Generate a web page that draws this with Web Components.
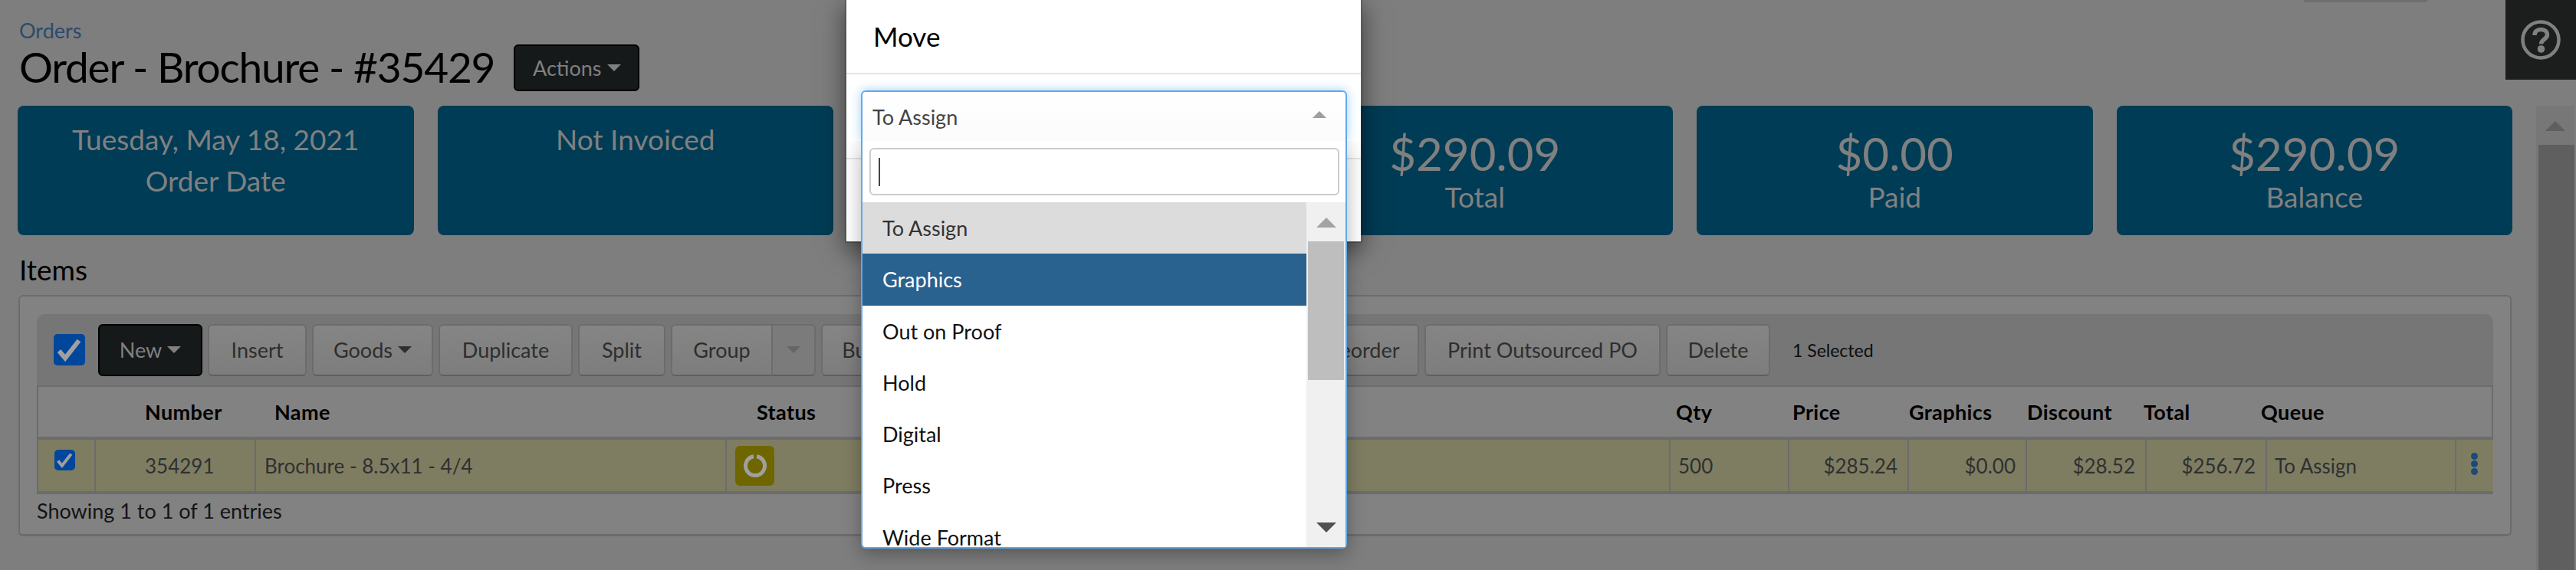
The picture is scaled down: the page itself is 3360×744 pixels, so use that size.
<!DOCTYPE html>
<html>
<head>
<meta charset="utf-8">
<title>Order - Brochure - #35429</title>
<style>
    html, body { margin: 0; height: 744px; overflow: hidden; background: #7e7e7e; }
    body { position: relative; font-family: Lato, "Liberation Sans", sans-serif; }
    stat-tile span[slot] { display: block; }
</style>
</head>
<body>
<order-page>
    <a slot="crumb">Orders</a>
    <span slot="title">Order - Brochure - #35429</span>
    <app-button slot="actions" dark caret style="width:164px;height:61px">Actions</app-button>
    <stat-tile><span slot="value">Tuesday, May 18, 2021</span>Order Date</stat-tile>
    <stat-tile><span slot="value">Not Invoiced</span></stat-tile>
    <stat-tile></stat-tile>
    <stat-tile big><span slot="value">$290.09</span>Total</stat-tile>
    <stat-tile big><span slot="value">$0.00</span>Paid</stat-tile>
    <stat-tile big><span slot="value">$290.09</span>Balance</stat-tile>
    <items-panel slot="items"></items-panel>
</order-page>
<top-strip></top-strip>
<help-tab></help-tab>
<scroll-bar page></scroll-bar>
<move-modal>
    <select-box value="To Assign"></select-box>
</move-modal>

<script>
const CHECK = `<svg viewBox="0 0 41 41"><path d="M7 22l8 9.500L33 8.500" fill="none" stroke="#a0a0a0" stroke-width="6"/></svg>`;

class OrderPage extends HTMLElement {
    constructor() {
        super();
        this.attachShadow({ mode: 'open' });
        this.shadowRoot.innerHTML = `
        <style>
            :host { display: block; padding: 25px 83px 0 23px; color: #000; }
            .crumb { font-size: 27px; line-height: 30px; padding-left: 2px; color: #2c4a6d; }
            .head { display: flex; align-items: center; gap: 25px; height: 61px; margin-top: 3px; padding-left: 2px; }
            .title { font-size: 55px; line-height: 57px; letter-spacing: -1.200px; padding-bottom: 3px; }
            .tiles { display: grid; grid-template-columns: repeat(6, 1fr); gap: 31px; margin-top: 19px; }
            h2 { font-weight: normal; font-size: 37px; line-height: 46px; margin: 22px 0 10px 2px; }
            ::slotted(items-panel) { margin: 0 1px; }
        </style>
        <div class="crumb"><slot name="crumb"></slot></div>
        <div class="head">
            <div class="title"><slot name="title"></slot></div>
            <slot name="actions"></slot>
        </div>
        <div class="tiles"><slot></slot></div>
        <h2>Items</h2>
        <slot name="items"></slot>
        `;
    }
}
customElements.define('order-page', OrderPage);

class StatTile extends HTMLElement {
    constructor() {
        super();
        this.attachShadow({ mode: 'open' });
        this.shadowRoot.innerHTML = `
        <style>
            :host {
                display: block;
                box-sizing: border-box;
                height: 169px;
                padding-top: 17px;
                background: #003c55;
                border-radius: 8px;
                color: #808080;
                text-align: center;
                font-size: 37px;
                line-height: 54px;
            }
            :host([big]) { padding-top: 29px; line-height: 47px; }
            .value { display: block; }
            :host([big]) .value { font-size: 60px; line-height: 66px; }
        </style>
        <span class="value"><slot name="value"></slot></span>
        <slot></slot>
        `;
    }
}
customElements.define('stat-tile', StatTile);

class AppButton extends HTMLElement {
    constructor() {
        super();
        this.attachShadow({ mode: 'open' });
        this.shadowRoot.innerHTML = `
        <style>
            :host {
                display: inline-flex;
                flex: none;
                align-items: center;
                justify-content: center;
                gap: 7px;
                box-sizing: border-box;
                height: 68px;
                font-size: 27px;
                color: #2e2e2e;
                background: linear-gradient(#858585, #7d7d7d);
                border: 2px solid #6c6c6c;
                border-bottom-color: #5f5f5f;
                border-radius: 6px;
                white-space: nowrap;
            }
            :host([dark]) { background: #16191a; border-color: #000; color: #808080; }
            :host([muted]) { background: #7b7b7b; color: #666; border-radius: 0 6px 6px 0; border-left: 0; }
            :host([joined]) { border-radius: 6px 0 0 6px; }
            .caret { display: none; border: 9px solid transparent; border-top-color: currentColor; border-bottom: 0; }
            :host([caret]) .caret { display: block; }
        </style>
        <slot></slot><span class="caret"></span>
        `;
    }
}
customElements.define('app-button', AppButton);

class ItemsPanel extends HTMLElement {
    constructor() {
        super();
        this.attachShadow({ mode: 'open' });
        const buttons = [
            ['New', 136, 'dark caret'], ['Insert', 129, ''], ['Goods', 158, 'caret'],
            ['Duplicate', 175, ''], ['Split', 114, ''],
            ['Group', 133, 'joined', -7], ['', 56, 'muted caret'],
            ['Bulk Edit', 160, ''], ['Move', 220, ''], ['Copy', 234, ''], ['Reorder', 145, ''],
            ['Print Outsourced PO', 308, ''], ['Delete', 136, '']
        ].map(([text, w, attrs, m]) =>
            `<app-button ${attrs} style="width:${w}px;${m ? `margin-right:${m}px` : ''}">${text}</app-button>`).join('');

        const heads = [['', 139], ['Number', 169], ['Name', 629], ['Status', 1199], ['Qty', 152],
            ['Price', 152], ['Graphics', 154], ['Discount', 152], ['Total', 153], ['Queue', 299]]
            .map(([t, w]) => `<div style="width:${w}px">${t}</div>`).join('');

        this.shadowRoot.innerHTML = `
        <style>
            :host {
                display: block;
                box-sizing: border-box;
                height: 315px;
                padding: 23px 22px 0;
                background: #828282;
                border: 2px solid #6c6c6c;
                border-bottom-width: 3px;
                border-radius: 6px;
                font-size: 26px;
                color: #303030;
            }
            .bar {
                display: flex;
                align-items: center;
                gap: 7px;
                box-sizing: border-box;
                height: 95px;
                padding-left: 22px;
                background: #767676;
                border-bottom: 2px solid #6c6c6c;
                border-radius: 10px 10px 0 0;
            }
            .all { width: 41px; height: 41px; margin-right: 10px; background: #00469a; border-radius: 5px; flex: none; }
            svg { display: block; }
            .count { margin-left: 22px; font-size: 23px; color: #0c0c0c; }
            .head {
                display: flex;
                align-items: center;
                box-sizing: border-box;
                height: 69px;
                border: solid #6c6c6c;
                border-width: 0 2px 4px;
                font-weight: bold;
                font-size: 27px;
                letter-spacing: .4px;
                color: #000;
            }
            .head div { flex: none; }
            .row {
                display: grid;
                grid-template-columns: 75px 209px 614px 1231px 155px 156px 154px 156px 157px 247px 50px;
                height: 71px;
                box-sizing: border-box;
                background: #7e7d62;
                border-bottom: 4px solid #6c6c6c;
            }
            .row > div {
                display: flex;
                align-items: center;
                padding: 0 13px;
                border-left: 2px solid #6c6c6c;
                box-sizing: border-box;
                min-width: 0;
            }
            .row .num { justify-content: flex-end; }
            .pick { width: 27px; height: 27px; margin: -14px 0 0 21px; background: #00469a; border-radius: 5px; flex: none; }
            .badge { display: flex; align-items: center; justify-content: center; width: 51px; height: 52px; background: #706600; border-radius: 6px; }
            .dots { display: flex; flex-direction: column; gap: 1px; margin: -5px 0 0 19px; }
            .dots i { display: block; width: 9px; height: 9px; border-radius: 50%; background: #1d4a7a; }
            .foot { margin-top: 5px; font-size: 27px; line-height: 34px; color: #141414; }
        </style>
        <div class="bar">
            <div class="all">${CHECK}</div>
            ${buttons}
            <span class="count">1 Selected</span>
        </div>
        <div class="head">${heads}</div>
        <div class="row">
            <div style="padding:0"><div class="pick">${CHECK}</div></div>
            <div style="padding-left:64px">354291</div>
            <div style="padding-left:11px">Brochure - 8.5x11 - 4/4</div>
            <div style="padding-left:11px">
                <div class="badge">
                    <svg width="32" height="32" viewBox="0 0 32 32"><path d="M18 3.700A12.500 12.500 0 1 1 14 3.700" fill="none" stroke="#a0a0a0" stroke-width="5"/></svg>
                </div>
            </div>
            <div style="padding-left:10px">500</div>
            <div class="num">$285.24</div>
            <div class="num">$0.00</div>
            <div class="num">$28.52</div>
            <div class="num">$256.72</div>
            <div style="padding-left:10px">To Assign</div>
            <div style="padding:0"><div class="dots"><i></i><i></i><i></i></div></div>
        </div>
        <div class="foot">Showing 1 to 1 of 1 entries</div>
        `;
    }
}
customElements.define('items-panel', ItemsPanel);

class TopStrip extends HTMLElement {
    constructor() {
        super();
        this.attachShadow({ mode: 'open' });
        this.shadowRoot.innerHTML = `
        <style>
            :host { position: absolute; top: 0; left: 3005px; width: 161px; height: 3px; background: #6f6f6f; }
        </style>
        `;
    }
}
customElements.define('top-strip', TopStrip);

class HelpTab extends HTMLElement {
    constructor() {
        super();
        this.attachShadow({ mode: 'open' });
        this.shadowRoot.innerHTML = `
        <style>
            :host {
                position: absolute;
                top: 0;
                right: 0;
                display: flex;
                align-items: center;
                justify-content: center;
                width: 92px;
                height: 104px;
                background: #1c1e1e;
            }
        </style>
        <svg width="52" height="52" viewBox="0 0 52 52" fill="none" stroke="#808080">
            <circle cx="26" cy="26" r="23.500" stroke-width="4.500"/>
            <path d="M18 20c0-5 3.500-7.500 8-7.500s8.500 2.500 8.500 7c0 5.500-8 6-8 12" stroke-width="5.500"/>
            <circle cx="26.500" cy="38" r="4.800" fill="#808080" stroke="none"/>
        </svg>
        `;
    }
}
customElements.define('help-tab', HelpTab);

class ScrollBar extends HTMLElement {
    constructor() {
        super();
        this.attachShadow({ mode: 'open' });
        this.shadowRoot.innerHTML = `
        <style>
            :host {
                display: flex;
                flex-direction: column;
                flex: none;
                width: 51px;
                background: #f0f0f0;
                --thumb: #bebebe;
                --up: #a3a3a3;
                --down: #505050;
            }
            :host([page]) {
                position: absolute;
                top: 138px;
                right: 2px;
                bottom: 0;
                width: 50px;
                background: #777;
                --thumb: #5f5f5f;
                --up: #5f5f5f;
            }
            .up { flex: none; height: 51px; box-sizing: border-box; padding-top: 20px; }
            .up i, .down i { display: block; width: 0; margin: 0 auto; border: 13px solid transparent; border-top: 0; border-bottom-color: var(--up); }
            .thumb { flex: none; height: 181px; margin: 0 2px; background: var(--thumb); }
            :host([page]) .thumb { flex: 1; margin: 0 0 0 3px; }
            .rest { flex: 1; }
            :host([page]) .rest, :host([page]) .down { display: none; }
            .down { flex: none; height: 32px; }
            .down i { border: 13px solid transparent; border-bottom: 0; border-top-color: var(--down); }
        </style>
        <div class="up"><i></i></div>
        <div class="thumb"></div>
        <div class="rest"></div>
        <div class="down"><i></i></div>
        `;
    }
}
customElements.define('scroll-bar', ScrollBar);

class SelectBox extends HTMLElement {
    constructor() {
        super();
        this.attachShadow({ mode: 'open' });
        const options = ['To Assign', 'Graphics', 'Out on Proof', 'Hold', 'Digital', 'Press', 'Wide Format'];
        this.shadowRoot.innerHTML = `
        <style>
            :host { display: block; position: relative; height: 66px; font-size: 27px; color: #111; }
            .selection {
                display: flex;
                align-items: center;
                justify-content: space-between;
                box-sizing: border-box;
                height: 66px;
                padding: 0 25px 0 13px;
                background: linear-gradient(#fff, #fbfbfb);
                border: 2px solid #5ea9ec;
                border-bottom: 0;
                border-radius: 6px 6px 0 0;
                box-shadow: 0 0 14px rgba(82,168,236,.55);
                color: #444;
            }
            .arrow { width: 0; border: 9px solid transparent; border-top: 0; border-bottom-color: #9f9f9f; margin-top: -6px; }
            .drop {
                position: absolute;
                top: 100%;
                left: 0;
                right: 0;
                display: flex;
                flex-direction: column;
                box-sizing: border-box;
                height: 532px;
                background: #fff;
                border: 2px solid #5ea9ec;
                border-top: 0;
                border-radius: 0 0 6px 6px;
                box-shadow: 0 8px 24px rgba(0,0,0,.3);
                clip-path: inset(0 -40px -40px -40px);
                z-index: 1;
            }
            .search { flex: none; height: 80px; box-sizing: border-box; padding: 9px 8px 9px 9px; }
            .input { display: flex; align-items: center; box-sizing: border-box; height: 62px; padding-left: 10px; border: 2px solid #ccc; border-radius: 6px; }
            .input i { display: block; width: 2px; height: 37px; background: #444; }
            .results { flex: 1; display: flex; min-height: 0; }
            .list { flex: 1; overflow: hidden; }
            .list div { box-sizing: border-box; height: 67.300px; line-height: 67px; padding-left: 26px; }
            .list .seen { background: #dcdcdc; color: #333; }
            .list .on { background: #29618f; color: #fff; }
        </style>
        <div class="selection"><span>${this.getAttribute('value')}</span><span class="arrow"></span></div>
        <div class="drop">
            <div class="search"><div class="input"><i></i></div></div>
            <div class="results">
                <div class="list">
                    ${options.map((o, i) => `<div class="${i == 0 ? 'seen' : i == 1 ? 'on' : ''}">${o}</div>`).join('')}
                </div>
                <scroll-bar></scroll-bar>
            </div>
        </div>
        `;
    }
}
customElements.define('select-box', SelectBox);

class MoveModal extends HTMLElement {
    constructor() {
        super();
        this.attachShadow({ mode: 'open' });
        this.shadowRoot.innerHTML = `
        <style>
            :host { position: absolute; inset: 0; overflow: hidden; }
            .dialog {
                box-sizing: border-box;
                width: 675px;
                height: 319px;
                margin: -2px 0 0 1102px;
                background: #fff;
                border: 2px solid rgba(0,0,0,.2);
                background-clip: padding-box;
                box-shadow: 0 10px 30px rgba(0,0,0,.5);
                color: #000;
            }
            .head { box-sizing: border-box; height: 97px; padding: 24px 0 0 35px; border-bottom: 2px solid #e5e5e5; font-size: 35px; line-height: 46px; }
            .body { box-sizing: border-box; height: 111px; padding: 21px 18px 0 19px; border-bottom: 2px solid #e5e5e5; }
        </style>
        <div class="dialog">
            <div class="head">Move</div>
            <div class="body"><slot></slot></div>
        </div>
        `;
    }
}
customElements.define('move-modal', MoveModal);
</script>
</body>
</html>
